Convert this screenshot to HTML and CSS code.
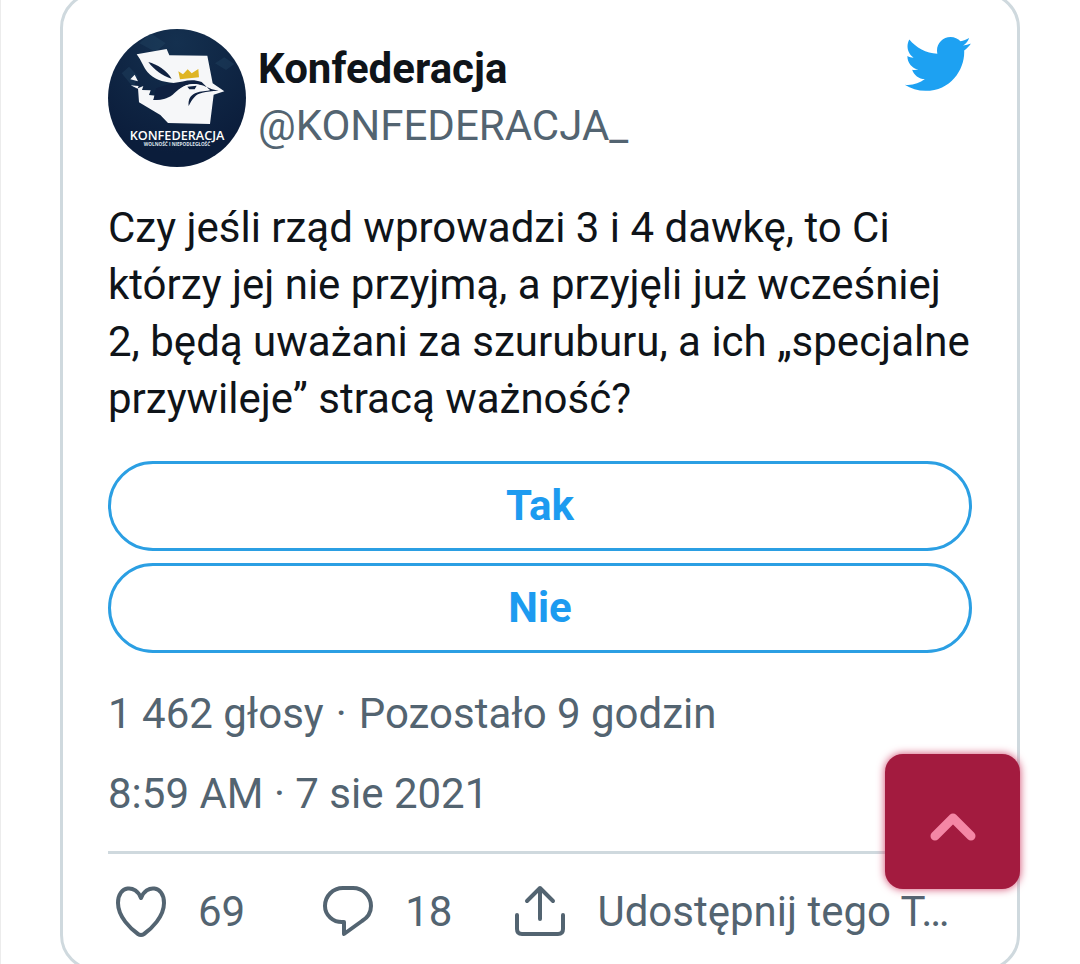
FILE: index.html
```html
<!DOCTYPE html>
<html lang="pl">
<head>
<meta charset="utf-8">
<meta name="viewport" content="width=device-width, initial-scale=1">
<title>Konfederacja</title>
<link rel="stylesheet" href="styles.css">
</head>
<body>
<article class="card">
  <header class="header">
    <svg class="avatar" viewBox="24 27 414 414" role="img" aria-label="Konfederacja">
      <defs>
        <clipPath id="disc"><circle cx="231" cy="234" r="207"/></clipPath>
        <radialGradient id="night" cx="50%" cy="10%" r="80%">
          <stop offset="0" stop-color="#14304f"/>
          <stop offset="1" stop-color="#0b1d3b"/>
        </radialGradient>
      </defs>
      <g clip-path="url(#disc)">
        <rect x="24" y="27" width="414" height="414" fill="url(#night)"/>
        <path fill="#234765" opacity=".4" d="M118 70l34-30 45 30-30 26zM65 160l22-20 26 28-12 35zM345 130l28-18 30 20-25 18z"/>
        <path fill="#f6f7f9" d="M110 103L200 87 208 106 322 107 338 190 373 214 341 224 330 312 204 309 181 285 117 247 114 205 130 198 126 210 152 211 147 225 168 227 160 240C188 240 207 232 222 213L222 189C185 187 160 176 143 157C130 142 125 122 110 103Z"/>
        <path fill="#f6f7f9" d="M104 164L114 184 91 178ZM92 196L116 198 113 206Z"/>
        <path fill="#0f2141" d="M160 240C184 240 202 236 218 224C233 211 249 194 277 192C300 191 316 199 336 208L356 212C335 213 321 214 307 218C287 222 277 236 266 258C264 239 270 227 287 219C303 213 319 214 330 211L305 186C270 174 250 187 220 189L168 205Z"/>
        <path fill="#f6f7f9" d="M224 224C237 208 254 194 277 193C302 192 315 202 330 210C308 211 294 212 281 220L248 236Z"/>
        <path fill="#0f2141" d="M145 126C172 134 199 149 215 176C187 168 163 150 145 126ZM262 200L290 197 284 208 268 208Z"/>
        <path fill="#dfb524" d="M235 154L249 163 263 148 275 160 295 147 297 172 240 178Z"/>
        <text class="logo-name" x="231" y="360" text-anchor="middle">KONFEDERACJA</text>
        <text class="logo-motto" x="231" y="378" text-anchor="middle">WOLNOŚĆ I NIEPODLEGŁOŚĆ</text>
      </g>
    </svg>
    <div class="author">
      <a class="name" href="#">Konfederacja</a>
      <a class="handle" href="#">@KONFEDERACJA_</a>
    </div>
    <svg class="bird" viewBox="0 0 24 24" role="img" aria-label="Twitter">
      <path fill="#1da1f2" d="M23.643 4.937c-.835.37-1.732.62-2.675.733.962-.576 1.7-1.49 2.048-2.578-.9.534-1.897.922-2.958 1.13-.85-.904-2.06-1.47-3.4-1.47-2.572 0-4.658 2.086-4.658 4.66 0 .364.042.718.12 1.06-3.873-.195-7.304-2.05-9.602-4.868-.4.69-.63 1.49-.63 2.342 0 1.616.823 3.043 2.072 3.878-.764-.025-1.482-.234-2.11-.583v.06c0 2.257 1.605 4.14 3.737 4.568-.392.106-.803.162-1.227.162-.3 0-.593-.028-.877-.082.593 1.85 2.313 3.198 4.352 3.234-1.595 1.25-3.604 1.995-5.786 1.995-.376 0-.747-.022-1.112-.065 2.062 1.323 4.51 2.093 7.14 2.093 8.57 0 13.255-7.098 13.255-13.254 0-.2-.005-.402-.014-.602.91-.658 1.7-1.477 2.323-2.41z"/>
    </svg>
  </header>
  <p class="message">Czy jeśli rząd wprowadzi 3 i 4 dawkę, to Ci którzy jej nie przyjmą, a przyjęli już wcześniej 2, będą uważani za szuruburu, a ich „specjalne przywileje” stracą ważność?</p>
  <div class="poll">
    <button class="option" type="button">Tak</button>
    <button class="option" type="button">Nie</button>
  </div>
  <p class="meta votes"><span>1 462 głosy</span><span>·</span><span>Pozostało 9 godzin</span></p>
  <p class="meta date">8:59 AM · 7 sie 2021</p>
  <footer class="actions">
    <button class="action" type="button" aria-label="Polub, 69">
      <svg class="icon" viewBox="0 0 66 66"><path d="M33 20C28 6 10 7 10 25C10 39 23 51 30 56Q33 58 36 56C43 51 56 39 56 25C56 7 38 6 33 20Z"/></svg>
      <span>69</span>
    </button>
    <button class="action" type="button" aria-label="Odpowiedz, 18">
      <svg class="icon" viewBox="0 0 66 66"><path d="M28 10H38C48 10 56 18 56 28C56 35 52 40 47 43L29 56V44C18 45 10 37 10 28C10 18 18 10 28 10Z"/></svg>
      <span>18</span>
    </button>
    <button class="action share" type="button">
      <svg class="icon" viewBox="0 0 66 66"><path d="M33 41V10M20 23L33 10L46 23M10 37V51Q10 56 15 56H51Q56 56 56 51V37"/></svg>
      <span>Udostępnij tego T…</span>
    </button>
  </footer>
</article>
<button class="to-top" type="button" aria-label="Do góry">
  <svg class="chevron" viewBox="0 0 48 32"><path d="M6 25L24 7L42 25"/></svg>
</button>
</body>
</html>
```
FILE: styles.css
```css
* {
  box-sizing: border-box;
}

body {
  height: 100vh;
  margin: 0;
  padding: 0 60px;
  overflow: hidden;
  box-shadow: inset 1px 0 #ececec;
  background: #fff;
  color: #0f1419;
  font-family: Roboto, "Noto Sans", sans-serif;
  font-size: 42px;
  line-height: 57px;
}

button {
  padding: 0;
  border: 0;
  background: none;
  color: inherit;
  font: inherit;
  cursor: pointer;
}

a {
  color: inherit;
  text-decoration: none;
}

p {
  margin: 0;
}

.card {
  margin-top: -8px;
  padding: 34px 45px 24px;
  border: 3px solid #cfd9de;
  border-radius: 36px;
}

.header {
  display: flex;
  align-items: flex-start;
}

.avatar {
  flex: none;
  width: 138px;
  height: 138px;
}

.logo-name {
  fill: #fff;
  font: 600 38px "Open Sans", sans-serif;
}

.logo-motto {
  fill: #dfe4ec;
  font: 700 14px/1 "Open Sans", sans-serif;
}

.author {
  display: flex;
  flex: 1;
  flex-direction: column;
  min-width: 0;
  padding: 11px 0 0 12px;
}

.name {
  font-weight: 700;
}

.handle {
  color: #536471;
}

.bird {
  flex: none;
  width: 70px;
  height: 70px;
}

.message {
  margin-top: 32px;
}

.poll {
  display: grid;
  gap: 12px;
  margin-top: 34px;
}

.option {
  height: 90px;
  padding-bottom: 2px;
  border: 3px solid #2b9fe3;
  border-radius: 45px;
  color: #1d9bf0;
  font-weight: 700;
}

.meta {
  margin-top: 32px;
  color: #536471;
}

.votes {
  display: flex;
  gap: 12px;
}

.date {
  margin-top: 23px;
}

.actions {
  display: flex;
  gap: 70px;
  margin-top: 29px;
  padding-top: 24px;
  border-top: 3px solid #cfd9de;
  color: #536471;
}

.action {
  display: flex;
  flex: none;
  align-items: center;
  gap: 24px;
}

.share {
  margin-left: -15px;
  white-space: nowrap;
}

.icon {
  flex: none;
  width: 66px;
  height: 66px;
  fill: none;
  stroke: currentColor;
  stroke-width: 4;
  stroke-linecap: round;
  stroke-linejoin: round;
}

.to-top {
  position: fixed;
  right: 60px;
  bottom: 75px;
  display: grid;
  place-items: center;
  width: 135px;
  height: 135px;
  padding-top: 10px;
  border-radius: 18px;
  background: #a31b3f;
  box-shadow: 0 0 9px #d0446a;
}

.chevron {
  width: 48px;
  height: 32px;
  fill: none;
  stroke: #f487a5;
  stroke-width: 9;
  stroke-linecap: round;
  stroke-linejoin: round;
}
```
